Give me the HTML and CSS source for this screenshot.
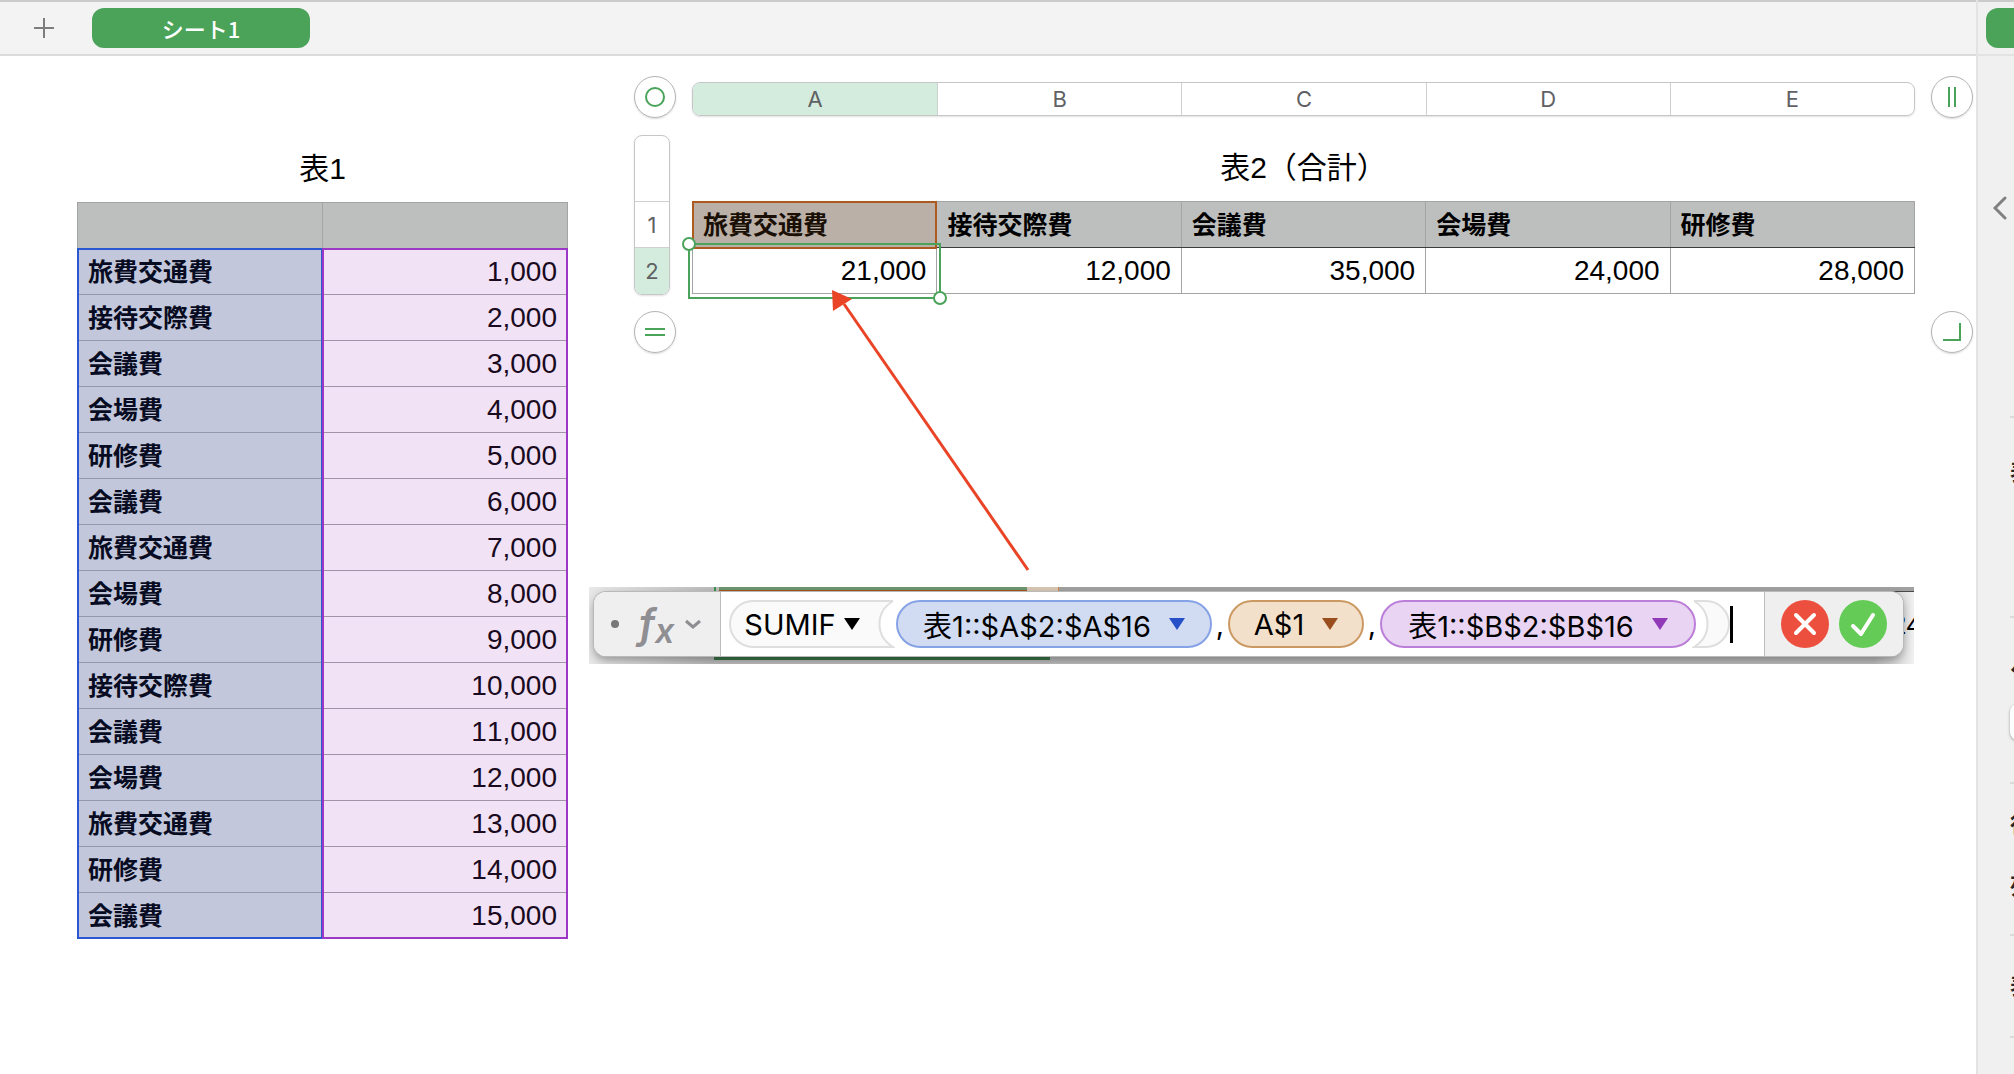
FILE: index.html
```html
<!DOCTYPE html>
<html lang="ja">
  <head>
    <meta charset="UTF-8" />
    <meta name="viewport" content="width=device-width, initial-scale=1.0" />
    <title>シート1</title>
    <link rel="stylesheet" href="styles.css">
  </head>
  <body>
    <main class="workspace">
      <nav class="sheet-bar">
        <button class="add-sheet" aria-label="シートを追加">
          <svg width="20" height="20" viewBox="0 0 20 20"><path d="M10 0v20M0 10h20" /></svg>
        </button>
        <button class="sheet-tab">シート1</button>
      </nav>

      <div class="canvas">
        <section class="sheet-table source">
          <table>
            <caption>表1</caption>
            <thead>
              <tr><th></th><th></th></tr>
            </thead>
            <tbody>
              <tr><th>旅費交通費</th><td>1,000</td></tr>
              <tr><th>接待交際費</th><td>2,000</td></tr>
              <tr><th>会議費</th><td>3,000</td></tr>
              <tr><th>会場費</th><td>4,000</td></tr>
              <tr><th>研修費</th><td>5,000</td></tr>
              <tr><th>会議費</th><td>6,000</td></tr>
              <tr><th>旅費交通費</th><td>7,000</td></tr>
              <tr><th>会場費</th><td>8,000</td></tr>
              <tr><th>研修費</th><td>9,000</td></tr>
              <tr><th>接待交際費</th><td>10,000</td></tr>
              <tr><th>会議費</th><td>11,000</td></tr>
              <tr><th>会場費</th><td>12,000</td></tr>
              <tr><th>旅費交通費</th><td>13,000</td></tr>
              <tr><th>研修費</th><td>14,000</td></tr>
              <tr><th>会議費</th><td>15,000</td></tr>
            </tbody>
          </table>
          <div class="range range-a"></div>
          <div class="range range-b"></div>
        </section>

        <section class="editor">
          <button class="handle" aria-label="表を選択">
            <svg width="42" height="42" viewBox="0 0 42 42"><circle cx="21" cy="21" r="9" /></svg>
          </button>
          <div class="column-bar">
            <button class="active">A</button>
            <button>B</button>
            <button>C</button>
            <button>D</button>
            <button>E</button>
          </div>
          <button class="handle" aria-label="列を追加">
            <svg width="42" height="42" viewBox="0 0 42 42"><path d="M18 11v20M24 11v20" /></svg>
          </button>

          <div class="row-bar">
            <span></span>
            <button>1</button>
            <button class="active">2</button>
          </div>
          <div class="sheet-table summary">
            <table>
              <caption>表2（合計）</caption>
              <thead>
                <tr>
                  <th class="referenced">旅費交通費</th>
                  <th>接待交際費</th>
                  <th>会議費</th>
                  <th>会場費</th>
                  <th>研修費</th>
                </tr>
              </thead>
              <tbody>
                <tr>
                  <td>21,000</td>
                  <td>12,000</td>
                  <td>35,000</td>
                  <td>24,000</td>
                  <td>28,000</td>
                </tr>
              </tbody>
            </table>
            <div class="range range-c"></div>
            <div class="selection">
              <i class="knob start"></i>
              <i class="knob end"></i>
            </div>
          </div>
          <span></span>

          <button class="handle" aria-label="行を追加">
            <svg width="42" height="42" viewBox="0 0 42 42"><path d="M11 18h20M11 24h20" /></svg>
          </button>
          <span></span>
          <button class="handle" aria-label="行と列を追加">
            <svg width="42" height="42" viewBox="0 0 42 42"><path d="M12 29h17v-17" /></svg>
          </button>
        </section>

        <svg class="arrow" width="200" height="284" viewBox="0 0 200 284">
          <path class="shaft" d="M12 14L196 280" />
          <path class="head" d="M0 0L20 9L1 21z" />
        </svg>

        <div class="formula">
          <div class="strip top">
            <i class="edge-gap"></i>
            <i class="edge-ref"></i>
            <i class="edge-sand"></i>
            <i class="edge-gray"></i>
          </div>
          <span class="peek">24</span>
          <div class="strip bottom"></div>
          <div class="formula-bar">
            <button class="fx" aria-label="関数">
              <i class="dot"></i>
              <span class="fx-mark">f<sub>x</sub></span>
              <svg width="16" height="10" viewBox="0 0 16 10"><path d="M1 2l7 6l7 -6" /></svg>
            </button>
            <div class="tokens">
              <button class="token function">
                <svg class="shape" width="167" height="48" viewBox="0 0 167 48"><path d="M165 1H25a23 23 0 0 0 0 46H165C147 36 147 12 165 1" /></svg>
                SUMIF
                <svg class="tri" width="16" height="12" viewBox="0 0 16 12"><path d="M0 0h16l-8 12z" /></svg>
              </button>
              <button class="token blue">表1::$A$2:$A$16 <svg class="tri" width="16" height="12" viewBox="0 0 16 12"><path d="M0 0h16l-8 12z" /></svg></button>
              <span class="comma">,</span>
              <button class="token orange">A$1 <svg class="tri" width="16" height="12" viewBox="0 0 16 12"><path d="M0 0h16l-8 12z" /></svg></button>
              <span class="comma">,</span>
              <button class="token purple">表1::$B$2:$B$16 <svg class="tri" width="16" height="12" viewBox="0 0 16 12"><path d="M0 0h16l-8 12z" /></svg></button>
              <svg class="closing" width="38" height="48" viewBox="0 0 38 48"><path d="M2 1H14a23 23 0 0 1 0 46H2C20 36 20 12 2 1" /></svg>
              <i class="caret"></i>
            </div>
            <div class="actions">
              <button class="cancel" aria-label="キャンセル">
                <svg width="48" height="48" viewBox="0 0 48 48"><path d="M15 15l18 18M33 15l-18 18" /></svg>
              </button>
              <button class="accept" aria-label="確定">
                <svg width="48" height="48" viewBox="0 0 48 48"><path d="M14 26l8 8l12 -19" /></svg>
              </button>
            </div>
          </div>
        </div>
      </div>
    </main>

    <aside class="inspector">
      <div class="inspector-top"><button class="inspector-tab" aria-label="表"></button></div>
      <button class="collapse" aria-label="戻る">
        <svg width="14" height="24" viewBox="0 0 14 24"><path d="M12 2l-10 10l10 10" /></svg>
      </button>
      <div class="group styles"></div>
      <div class="group options">表</div>
      <div class="group headers">
        ヘ
        <button class="popup" aria-label="ヘッダ"></button>
      </div>
      <div class="group sizes"><span>行</span><span>列</span></div>
      <div class="group outline">表</div>
      <div class="group"></div>
    </aside>
  </body>
</html>
```

FILE: styles.css
```css
* {
  box-sizing: border-box;
}
body {
  display: flex;
  min-height: 100vh;
  margin: 0;
  overflow-x: hidden;
  background: #fff;
  color: #000;
  font-family: "Liberation Sans", "Noto Sans CJK JP", sans-serif;
}
button {
  padding: 0;
  border: none;
  background: none;
  color: inherit;
  font: inherit;
}
svg {
  display: block;
  fill: none;
}
.workspace {
  flex: 1;
  min-width: 0;
}

/* sheet tabs */
.sheet-bar {
  display: flex;
  align-items: center;
  gap: 38px;
  height: 56px;
  padding-left: 34px;
  border-top: 2px solid #cbcbcb;
  border-bottom: 2px solid #dbdbdb;
  background: #f3f3f3;
}
.add-sheet svg {
  stroke: #7d7d7d;
  stroke-width: 2;
}
.sheet-tab {
  width: 218px;
  height: 40px;
  border-radius: 12px;
  background: #4ba35a;
  color: #fff;
  font: 500 22px/36px "Noto Sans CJK JP", sans-serif;
}

.canvas {
  display: flex;
  position: relative;
  padding: 20px 3px 0 77px;
}

/* tables */
.sheet-table {
  position: relative;
}
.sheet-table table {
  width: 100%;
  border-collapse: collapse;
  table-layout: fixed;
}
.sheet-table caption {
  height: 66px;
  font-size: 30px;
  line-height: 66px;
}
.sheet-table tr {
  height: 46px;
}
.sheet-table th,
.sheet-table td {
  padding: 0 10px;
  border: 1px solid #a3a5a4;
  line-height: 32px;
}
.sheet-table th {
  font-size: 25px;
  font-weight: 700;
  text-align: left;
}
.sheet-table td {
  font-size: 28px;
  font-kerning: none;
  text-align: right;
}
.sheet-table thead th {
  background: #bdbfbe;
}
.source {
  width: 491px;
  margin: 60px 66px 0 0;
}
.source tbody th {
  border-color: #9399ae;
  background: #c2c7dc;
  color: #080c22;
}
.source tbody td {
  border-color: #a292aa;
  background: #f1e2f6;
  color: #1a0a20;
}
.range {
  position: absolute;
  border: 2px solid;
}
.range-a,
.range-b {
  top: 112px;
  bottom: 0;
  width: 246px;
}
.range-a {
  left: 0;
  border-color: #2a56d2;
}
.range-b {
  right: 0;
  border-color: #9b38c6;
}

/* table being edited */
.editor {
  flex: 1;
  display: grid;
  grid-template-columns: 42px 1fr 42px;
  grid-template-rows: 43px 160px 42px;
  gap: 16px;
}
.handle {
  width: 42px;
  height: 42px;
  border: 1px solid #b4b4b4;
  border-radius: 50%;
  box-shadow: 0 1px 2px rgba(0, 0, 0, 0.15);
}
.handle svg {
  margin: -1px;
  stroke: #4ba35a;
  stroke-width: 2;
}
.column-bar {
  display: grid;
  grid-template-columns: repeat(5, 1fr);
  align-self: end;
  height: 34px;
  margin-bottom: 3px;
}
.column-bar,
.row-bar {
  overflow: hidden;
  border: 1px solid #c6c6c6;
  border-radius: 8px;
  box-shadow: 0 1px 2px rgba(0, 0, 0, 0.12);
  color: #5f6164;
  font: 22px Inter, sans-serif;
}
.column-bar button + button {
  border-left: 1px solid #d0d0d0;
}
.row-bar {
  display: grid;
  grid-template-rows: 1fr 46px 47px;
  width: 36px;
}
.row-bar button {
  border-top: 1px solid #d0d0d0;
}
.column-bar .active,
.row-bar .active {
  background: #d3ecde;
}
.summary thead th {
  border-bottom-color: #3c3c3c;
}
.summary .referenced {
  background: #bbb0a7;
  color: #1a0f04;
}
.range-c {
  top: 66px;
  left: 0;
  width: 20%;
  height: 48px;
  border-color: #ad5a1e;
}
.selection {
  position: absolute;
  top: 108px;
  left: -4px;
  width: calc(20% + 8px);
  height: 56px;
  border: 2px solid #4ba35a;
}
.knob {
  position: absolute;
  width: 14px;
  height: 14px;
  border: 2px solid #4ba35a;
  border-radius: 50%;
  background: #fff;
}
.start {
  top: -8px;
  left: -8px;
}
.end {
  right: -8px;
  bottom: -8px;
}

.arrow {
  position: absolute;
  top: 234px;
  left: 832px;
}
.shaft {
  stroke: #ea4427;
  stroke-width: 3;
}
.head {
  fill: #ea4427;
}

/* floating formula editor */
.formula {
  position: absolute;
  top: 531px;
  right: 62px;
  left: 589px;
  height: 77px;
  padding: 5px 11px 8px 5px;
  overflow: hidden;
  background: linear-gradient(90deg, #e8e8e8, #bdbdbd 120px, #bdbdbd calc(100% - 40px), #f0f0f0);
}
.strip {
  display: flex;
  position: absolute;
  left: 125px;
}
.top {
  top: 0;
  right: 0;
  height: 5px;
}
.edge-gap {
  width: 5px;
  border-left: 2px solid #3b9150;
}
.edge-ref {
  width: 308px;
  border-top: 3px solid #6e9670;
  border-bottom: 2px solid #a4541c;
}
.edge-sand {
  width: 32px;
  border-right: 1px solid #d18749;
  background: #d7c6b3;
}
.edge-gray {
  flex: 1;
  border-bottom: 1px solid #4a4a4a;
  background: #a0a1a0;
}
.bottom {
  bottom: 4px;
  width: 336px;
  height: 3px;
  background: #397646;
}
.peek {
  position: absolute;
  top: 20px;
  right: -8px;
  font-size: 28px;
  line-height: 36px;
}
.formula-bar {
  display: flex;
  position: relative;
  height: 64px;
  overflow: hidden;
  border-radius: 12px;
  background: #fff;
  box-shadow: 0 0 0 1px #b9b9b9, 0 4px 10px rgba(0, 0, 0, 0.35);
  font: 29px Inter, "Noto Sans CJK JP", sans-serif;
}
.fx {
  display: flex;
  align-items: center;
  width: 127px;
  padding-left: 17px;
  border-right: 1px solid #bcbcbc;
  background: #efefef;
  color: #8e8e93;
}
.dot {
  width: 8px;
  height: 8px;
  border-radius: 50%;
  background: #787878;
}
.fx-mark {
  width: 46px;
  margin-left: 20px;
  font: italic 600 40px/48px Inter, sans-serif;
  text-align: left;
}
.fx-mark sub {
  font-size: 34px;
  line-height: 0;
  vertical-align: -5px;
}
.fx svg {
  stroke: #8e8e93;
  stroke-width: 3;
}
.tokens {
  flex: 1;
  display: flex;
  z-index: 0;
  align-items: center;
  padding-left: 7px;
}
.token {
  display: flex;
  align-items: center;
  justify-content: center;
  height: 48px;
  border: 2px solid;
  border-radius: 24px;
  white-space: nowrap;
}
.token .tri {
  margin-left: 18px;
}
.function {
  position: relative;
  width: 168px;
  padding-right: 20px;
  border: none;
}
.function .tri {
  margin-left: 8px;
  fill: #000;
}
.function .shape {
  position: absolute;
  inset: 0;
  z-index: -1;
}
.shape,
.closing {
  fill: #fafafa;
  stroke: #dedede;
  stroke-width: 2;
}
.blue {
  width: 316px;
  border-color: #86a2e6;
  background: #d1dbf2;
}
.blue .tri {
  fill: #2650c8;
}
.orange {
  width: 136px;
  border-color: #cb9a63;
  background: #f3e0cb;
}
.orange .tri {
  fill: #984f1d;
}
.purple {
  width: 316px;
  border-color: #bb7fd9;
  background: #e9d4f3;
}
.purple .tri {
  fill: #903ab8;
}
.comma {
  width: 16px;
  text-align: center;
}
.closing {
  margin-left: -4px;
}
.caret {
  width: 3px;
  height: 37px;
  background: #000;
}
.actions {
  display: flex;
  align-items: center;
  gap: 10px;
  padding: 0 16px;
  border-left: 1px solid #bcbcbc;
  background: #efefef;
}
.actions button {
  border-radius: 50%;
}
.actions svg {
  stroke: #fff;
  stroke-width: 4;
  stroke-linecap: round;
  stroke-linejoin: round;
}
.cancel {
  background: #ec4f3e;
}
.accept {
  background: #65cb57;
}

/* inspector, mostly past the right edge of the window */
.inspector {
  width: 38px;
  overflow: hidden;
  border-left: 2px solid #e3e3e3;
  background: #f0f0f0;
  font: 700 22px/32px "Noto Sans CJK JP", sans-serif;
}
.inspector-top {
  height: 56px;
  padding: 6px 0 0 8px;
  border-top: 2px solid #cbcbcb;
  border-bottom: 2px solid #e3e3e3;
}
.inspector-tab {
  width: 120px;
  height: 40px;
  border-radius: 12px;
  background: #4ba35a;
}
.collapse {
  display: block;
  margin: 140px 0 0 15px;
}
.collapse svg {
  stroke: #808080;
  stroke-width: 3;
  stroke-linecap: round;
}
.group {
  width: 120px;
  margin-left: 32px;
  border-bottom: 2px solid #dadada;
  color: #262626;
}
.group:last-child {
  border: none;
}
.styles {
  height: 198px;
}
.options {
  height: 200px;
  padding-top: 36px;
}
.headers {
  height: 166px;
  padding-top: 32px;
}
.popup {
  display: block;
  width: 80px;
  height: 36px;
  margin-top: 22px;
  border-radius: 8px;
  background: #fff;
  box-shadow: 0 1px 3px rgba(0, 0, 0, 0.35);
}
.sizes {
  display: flex;
  flex-direction: column;
  gap: 30px;
  height: 152px;
  padding-top: 22px;
}
.outline {
  height: 102px;
  padding-top: 32px;
}
```
